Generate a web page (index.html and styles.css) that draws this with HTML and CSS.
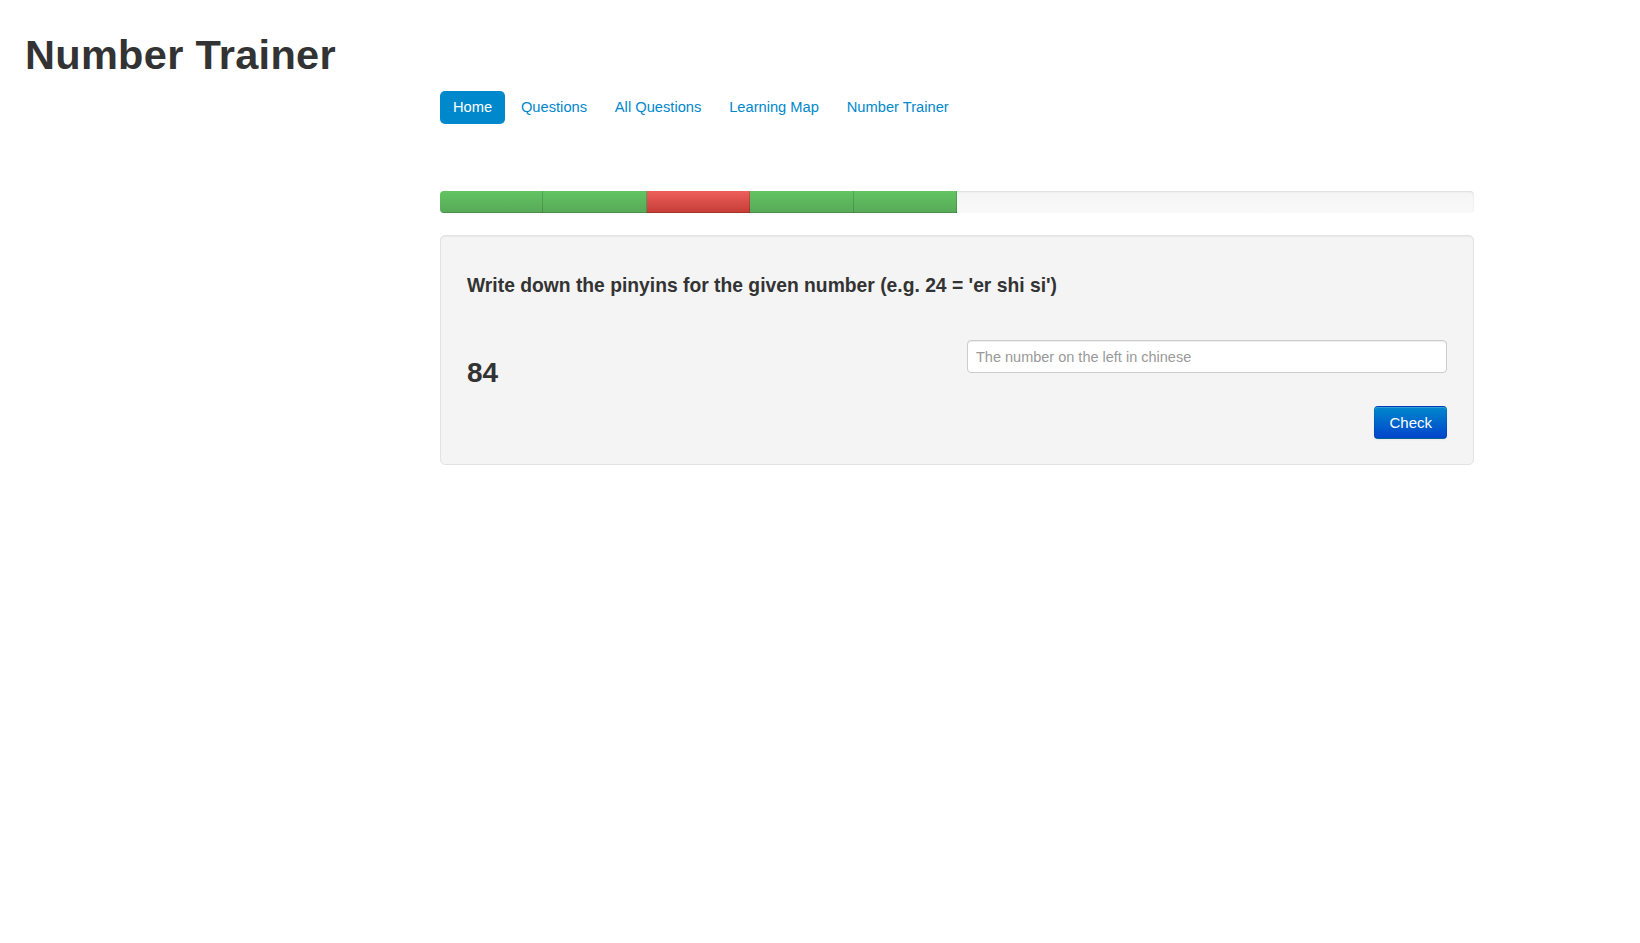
FILE: index.html
```html
<!DOCTYPE html>
<html lang="en">
<head>
<meta charset="utf-8">
<title>Number Trainer</title>
<link rel="stylesheet" href="styles.css">
</head>
<body>
<header class="page-header">
  <h1 class="page-title">Number Trainer</h1>
</header>
<main class="main">
  <nav class="nav">
    <a class="nav-link active" href="#">Home</a>
    <a class="nav-link" href="#">Questions</a>
    <a class="nav-link" href="#">All Questions</a>
    <a class="nav-link" href="#">Learning Map</a>
    <a class="nav-link" href="#">Number Trainer</a>
  </nav>
  <div class="progress">
    <div class="bar bar-success"></div>
    <div class="bar bar-success"></div>
    <div class="bar bar-danger"></div>
    <div class="bar bar-success"></div>
    <div class="bar bar-success"></div>
  </div>
  <section class="well">
    <h4 class="question">Write down the pinyins for the given number (e.g. 24 = 'er shi si')</h4>
    <div class="answer-row">
      <div class="number-col"><h2 class="number">84</h2></div>
      <div class="input-col"><input class="answer" type="text" placeholder="The number on the left in chinese"></div>
    </div>
    <div class="actions">
      <button class="btn-primary" type="button">Check</button>
    </div>
  </section>
</main>
</body>
</html>
```

FILE: styles.css
```css
html, body {
  margin: 0;
  padding: 0;
  background: #ffffff;
}

body {
  font-family: "Liberation Sans", Arial, Helvetica, sans-serif;
  color: #333333;
  font-size: 15px;
}

.page-header {
  padding: 33px 0 0 25px;
}

.page-title {
  margin: 0;
  font-size: 41.5px;
  line-height: 44px;
  font-weight: bold;
  color: #333333;
  letter-spacing: 0.3px;
}

.main {
  margin-left: 440px;
  width: 1034px;
}

.nav {
  display: flex;
  gap: 3.75px;
  margin-top: 14px;
}

.nav-link {
  display: block;
  padding: 8px 12px 8px 12px;
  line-height: 17px;
  font-size: 14.7px;
  color: #0088cc;
  text-decoration: none;
  border-radius: 5px;
}

.nav-link.active {
  padding: 8px 13px 7px 13px;
  background: #0088cc;
  color: #ffffff;
}

.progress {
  display: flex;
  height: 22px;
  margin-top: 67px;
  background: linear-gradient(to bottom, #f5f5f5, #f9f9f9);
  border-radius: 4px;
  box-shadow: inset 0 1px 2px rgba(0, 0, 0, 0.1);
  overflow: hidden;
}

.bar {
  width: 10%;
  height: 100%;
  box-shadow: inset -1px 0 0 rgba(0, 0, 0, 0.15), inset 0 -1px 0 rgba(0, 0, 0, 0.15);
}

.bar-success {
  background: linear-gradient(to bottom, #62c462, #57a957);
}

.bar-danger {
  background: linear-gradient(to bottom, #ee5f5b, #c43c35);
}

.well {
  margin-top: 22px;
  padding: 26px 26px 25px;
  background: #f4f4f4;
  border: 1px solid #e3e3e3;
  border-radius: 5px;
  box-shadow: inset 0 1px 1px rgba(0, 0, 0, 0.05);
}

.question {
  margin: 13px 0 43px;
  font-size: 19.3px;
  line-height: 22px;
  font-weight: bold;
  color: #333333;
}

.answer-row {
  display: flex;
  justify-content: space-between;
  align-items: flex-start;
}

.number {
  margin: 17px 0 0;
  font-size: 28px;
  line-height: 32px;
  font-weight: bold;
  color: #333333;
}

.answer {
  box-sizing: border-box;
  width: 480px;
  height: 33px;
  padding: 4px 8px;
  font-family: "Liberation Sans", Arial, sans-serif;
  font-size: 14.5px;
  color: #555555;
  background: #ffffff;
  border: 1px solid #cccccc;
  border-radius: 4px;
  box-shadow: inset 0 1px 1px rgba(0, 0, 0, 0.075);
  outline: none;
}

.answer::placeholder {
  color: #999999;
}

.actions {
  display: flex;
  justify-content: flex-end;
  margin-top: 17px;
}

.btn-primary {
  box-sizing: border-box;
  height: 33px;
  padding: 0 14px;
  font-family: "Liberation Sans", Arial, sans-serif;
  font-size: 15px;
  color: #ffffff;
  background: linear-gradient(to bottom, #0088cc, #0044cc);
  border: 1px solid #0044cc;
  border-color: rgba(0, 0, 0, 0.1) rgba(0, 0, 0, 0.1) rgba(0, 0, 0, 0.25);
  border-radius: 4px;
  box-shadow: inset 0 1px 0 rgba(255, 255, 255, 0.2), 0 1px 2px rgba(0, 0, 0, 0.05);
  cursor: pointer;
}
```
